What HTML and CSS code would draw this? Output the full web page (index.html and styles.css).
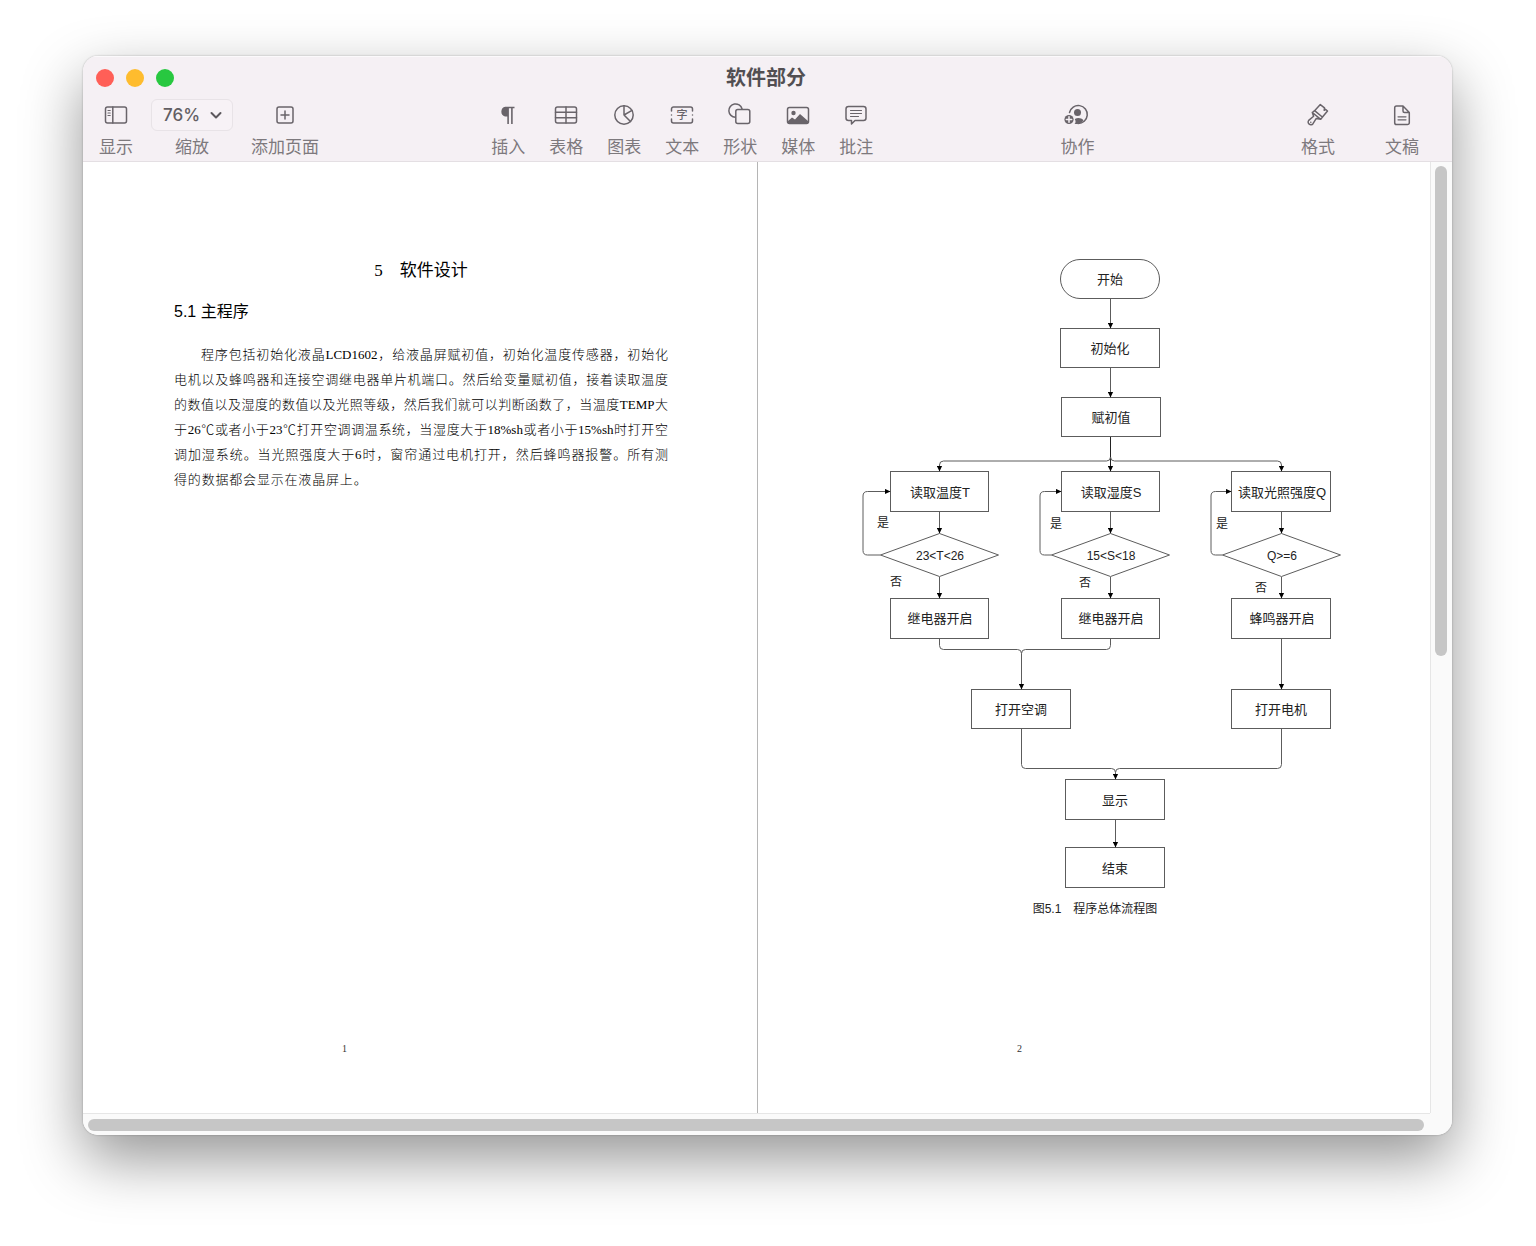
FILE: index.html
```html
<!DOCTYPE html>
<html lang="zh-CN">
<head>
<meta charset="utf-8">
<meta name="viewport" content="width=device-width, initial-scale=1">
<title>软件部分</title>
<link rel="stylesheet" href="styles.css">
</head>
<body>
<div class="window">
  <header class="titlebar">
    <div class="lights">
      <button class="light light-close" type="button" aria-label="关闭"></button>
      <button class="light light-min" type="button" aria-label="最小化"></button>
      <button class="light light-max" type="button" aria-label="全屏"></button>
    </div>
    <h1 class="title">软件部分</h1>
  </header>

  <div class="toolbar" role="toolbar">
    <div class="group group-view">
      <button class="tool" type="button">
        <svg class="icon" viewBox="0 0 28 28"><rect x="3.5" y="6" width="21" height="16" rx="2"/><path d="M10.8 6v16"/><path class="thin" d="M6 9.500h2.200M6 12h2.200M6 14.500h2.200"/></svg>
        <span>显示</span>
      </button>
      <div class="tool">
        <div class="zoom">
          <select class="zoom-select" id="zoom"><option>76%</option><option>100%</option></select>
          <svg class="chevron" viewBox="0 0 12 12"><path d="M1.5 4l4.5 4.5L10.500 4"/></svg>
        </div>
        <label for="zoom">缩放</label>
      </div>
      <button class="tool" type="button">
        <svg class="icon" viewBox="0 0 28 28"><rect x="6" y="6" width="16" height="16" rx="2"/><path d="M14 10v8M10 14h8"/></svg>
        <span>添加页面</span>
      </button>
    </div>

    <div class="group group-insert">
      <button class="tool" type="button">
        <svg class="icon" viewBox="0 0 28 28"><path class="solid" d="M20.500 5.800H11.300a5 5 0 0 0-.3 9.700H13.300V23h1.600V7.200h2.200V23h1.600V7.200h1.800z"/></svg>
        <span>插入</span>
      </button>
      <button class="tool" type="button">
        <svg class="icon" viewBox="0 0 28 28"><rect x="3.500" y="6" width="21" height="16" rx="2"/><path d="M3.500 11.300h21M3.500 16.700h21M14 6v16"/></svg>
        <span>表格</span>
      </button>
      <button class="tool" type="button">
        <svg class="icon" viewBox="0 0 28 28"><circle cx="14" cy="14" r="9.200"/><path d="M14 4.800V14l8-4.600M14 14l6.500 6.500"/></svg>
        <span>图表</span>
      </button>
      <button class="tool" type="button">
        <svg class="icon" viewBox="0 0 28 28"><path d="M3.500 10V8a2 2 0 0 1 2-2h17a2 2 0 0 1 2 2v2M3.500 18v2a2 2 0 0 0 2 2h17a2 2 0 0 0 2-2v-2M3.500 13.900v.2M24.500 13.900v.2"/><text class="icon-text" x="14" y="18" text-anchor="middle">字</text></svg>
        <span>文本</span>
      </button>
      <button class="tool" type="button">
        <svg class="icon" viewBox="0 0 28 28"><path d="M9.300 16.300A6.700 6.700 0 1 1 16 7.800"/><rect x="9.800" y="8.500" width="14" height="14" rx="2"/></svg>
        <span>形状</span>
      </button>
      <button class="tool" type="button">
        <svg class="icon" viewBox="0 0 28 28"><rect x="3.500" y="6.500" width="21" height="16" rx="2"/><circle class="solid" cx="9.500" cy="12" r="2.200"/><path class="solid" d="M4 20l4-3.500 3 2 5-5.500 8 7v1.500a1 1 0 0 1-1 1H5a1 1 0 0 1-1-1z"/></svg>
        <span>媒体</span>
      </button>
      <button class="tool" type="button">
        <svg class="icon" viewBox="0 0 28 28"><path d="M6.500 5.500h15a2.500 2.500 0 0 1 2.500 2.500v9a2.500 2.500 0 0 1-2.500 2.500H13L9.500 23v-3.500h-3A2.500 2.500 0 0 1 4 17V8a2.500 2.500 0 0 1 2.500-2.500z"/><path class="thin" d="M8.500 9.500h11M8.500 12.500h11M8.500 15.500h8"/></svg>
        <span>批注</span>
      </button>
    </div>

    <div class="group group-share">
      <button class="tool" type="button">
        <svg class="icon" viewBox="0 0 28 28"><path d="M5.500 11.500A9 9 0 1 1 14 22.500"/><circle class="solid" cx="13.500" cy="11.500" r="3.500"/><path class="solid" d="M10.500 22.800c1.500-.8 1.300-3 .3-4.800 3-1.600 6.500-1.200 8.800 1.300-2 2.800-5 4.300-9.100 3.500z"/><circle class="solid" cx="5" cy="18.500" r="4.600"/><path class="cut" d="M5 15.800v5.400M2.300 18.500h5.400"/></svg>
        <span>协作</span>
      </button>
    </div>

    <div class="group group-inspect">
      <button class="tool" type="button">
        <svg class="icon" viewBox="0 0 28 28"><path d="M8.300 11.500l8.400 6.800 1.600-2 5.200-6.300-2-1.700-1.300 1 .3-2.400-4.200-3.300-5.700 6.100zM8.300 11.500l1.300 3.700-4.900 4.200a2.700 2.700 0 1 0 4.300 3.300l3.300-5.300 4.400.9M10.600 9.700l7.700 6.300"/><circle class="solid" cx="6.800" cy="21.200" r=".8"/></svg>
        <span>格式</span>
      </button>
      <button class="tool" type="button">
        <svg class="icon" viewBox="0 0 28 28"><path d="M15 5H8.500a1.800 1.800 0 0 0-1.800 1.800v14.900a1.800 1.800 0 0 0 1.800 1.800h11a1.800 1.800 0 0 0 1.800-1.800V11.500zM15 5v5a1.500 1.500 0 0 0 1.500 1.500h4.800"/><path class="thin" d="M10 15.800h8M10 18.800h8"/></svg>
        <span>文稿</span>
      </button>
    </div>
  </div>

  <main class="viewport">
    <div class="pages">
      <article class="page page-text">
        <h2 class="chapter">5　软件设计</h2>
        <h3 class="section">5.1 主程序</h3>
        <p class="prose">
          <span class="line line-first">程序包括初始化液晶LCD1602，给液晶屏赋初值，初始化温度传感器，初始化</span>
          <span class="line">电机以及蜂鸣器和连接空调继电器单片机端口。然后给变量赋初值，接着读取温度</span>
          <span class="line">的数值以及湿度的数值以及光照等级，然后我们就可以判断函数了，当温度TEMP大</span>
          <span class="line">于26℃或者小于23℃打开空调调温系统，当湿度大于18%sh或者小于15%sh时打开空</span>
          <span class="line">调加湿系统。当光照强度大于6时，窗帘通过电机打开，然后蜂鸣器报警。所有测</span>
          <span class="line line-last">得的数据都会显示在液晶屏上。</span>
        </p>
        <footer class="folio">1</footer>
      </article>

      <article class="page page-figure">
        <figure class="figure">
          <svg class="flow" viewBox="-11 0 492 636" role="img" aria-label="程序总体流程图">
            <defs>
              <marker id="tip" markerUnits="userSpaceOnUse" markerWidth="6" markerHeight="6" refX="5" refY="3" orient="auto"><path class="tip" d="M0 .4L5.500 3L0 5.600z"/></marker>
            </defs>
            <g class="node">
              <rect x="200.500" y="3.500" width="99" height="39" rx="19.500"/>
              <rect x="200.500" y="72.500" width="99" height="39"/>
              <rect x="201.500" y="141.500" width="99" height="39"/>
              <rect x="30.500" y="215.500" width="98" height="40"/>
              <rect x="201.500" y="215.500" width="98" height="40"/>
              <rect x="371.500" y="215.500" width="99" height="40"/>
              <path d="M20.500 299L79.500 277.500L138.500 299L79.500 320.500z"/>
              <path d="M191.500 299L250.500 277.500L309.500 299L250.500 320.500z"/>
              <path d="M362.500 299L421.500 277.500L480.500 299L421.500 320.500z"/>
              <rect x="30.500" y="342.500" width="98" height="40"/>
              <rect x="201.500" y="342.500" width="98" height="40"/>
              <rect x="371.500" y="342.500" width="99" height="40"/>
              <rect x="111.500" y="433.500" width="99" height="39"/>
              <rect x="371.500" y="433.500" width="99" height="39"/>
              <rect x="205.500" y="523.500" width="99" height="40"/>
              <rect x="205.500" y="591.500" width="99" height="40"/>
            </g>
            <g class="edge">
              <path d="M250.500 43V72"/>
              <path d="M250.500 112V141"/>
              <path class="trunk" d="M250.500 181V215"/>
              <path d="M250.500 201q0 4-4 4H83.500q-4 0-4 4v6"/>
              <path d="M250.500 201q0 4 4 4H417.500q4 0 4 4v6"/>
              <path d="M79.500 256V277"/>
              <path d="M250.500 256V277"/>
              <path d="M421.500 256V277"/>
              <path d="M20.500 299H7.500q-4.500 0-4.500-4.500V240q0-4.500 4.500-4.500H30"/>
              <path d="M191.500 299H184.500q-4.500 0-4.500-4.500V240q0-4.500 4.500-4.500H201"/>
              <path d="M362.500 299H355.500q-4.500 0-4.500-4.500V240q0-4.500 4.500-4.500H371"/>
              <path d="M79.500 321V342"/>
              <path d="M250.500 321V342"/>
              <path d="M421.500 321V342"/>
              <path d="M79.500 383v6.500q0 4 4 4H157.500q4 0 4 4V433"/>
              <path class="join" d="M250.500 383v6.500q0 4-4 4H165.500q-4 0-4 4"/>
              <path d="M421.500 383V433"/>
              <path d="M161.500 473v35.500q0 4 4 4H251.500q4 0 4 4V523"/>
              <path class="join" d="M421.500 473v35.500q0 4-4 4H259.500q-4 0-4 4"/>
              <path d="M255.500 564V591"/>
            </g>
            <g class="node-text">
              <text x="250" y="28">开始</text>
              <text x="250" y="97">初始化</text>
              <text x="251" y="166">赋初值</text>
              <text x="80" y="241">读取温度T</text>
              <text x="251" y="241">读取湿度S</text>
              <text x="422" y="241">读取光照强度Q</text>
              <text x="80" y="367">继电器开启</text>
              <text x="251" y="367">继电器开启</text>
              <text x="422" y="367">蜂鸣器开启</text>
              <text x="161" y="458">打开空调</text>
              <text x="421" y="458">打开电机</text>
              <text x="255" y="549">显示</text>
              <text x="255" y="617">结束</text>
            </g>
            <g class="cond-text">
              <text x="80" y="304">23&lt;T&lt;26</text>
              <text x="251" y="304">15&lt;S&lt;18</text>
              <text x="422" y="304">Q&gt;=6</text>
              <text x="23" y="271">是</text>
              <text x="196" y="272">是</text>
              <text x="362" y="272">是</text>
              <text x="36" y="330">否</text>
              <text x="225" y="331">否</text>
              <text x="401" y="336">否</text>
            </g>
          </svg>
          <figcaption class="caption">图5.1　程序总体流程图</figcaption>
        </figure>
        <footer class="folio">2</footer>
      </article>
    </div>
    <div class="track track-y"><div class="thumb thumb-y"></div></div>
    <div class="track track-x"><div class="thumb thumb-x"></div></div>
  </main>
</div>
</body>
</html>
```
FILE: styles.css
```css
* {
  box-sizing: border-box;
}

body {
  margin: 0;
  min-height: 100vh;
  padding: 56px 84px 111px 83px;
  display: flex;
  background: #fff;
  color: #000;
  font-family: "Liberation Sans", "Noto Sans CJK SC", sans-serif;
}

h1,
h2,
h3,
p,
figure {
  margin: 0;
  font-weight: 400;
}

button {
  border: 0;
  padding: 0;
  background: none;
  font: inherit;
  color: inherit;
}

/* Window frame */
.window {
  flex: 1;
  min-width: 0;
  display: flex;
  flex-direction: column;
  border-radius: 15px;
  overflow: hidden;
  background: #fff;
  box-shadow: 0 0 2px rgba(0, 0, 0, 0.3), 0 24px 60px rgba(0, 0, 0, 0.42);
}

.titlebar {
  height: 43px;
  display: grid;
  grid-template-columns: 1fr auto 1fr;
  align-items: center;
  padding: 0 16px 0 13px;
  background: #f5f0f4;
  box-shadow: inset 0 1px #fbf9fb;
}

.lights {
  display: flex;
  gap: 12px;
}

.light {
  width: 18px;
  height: 18px;
  border-radius: 50%;
}

.light-close {
  background: #ff5f57;
}

.light-min {
  background: #febc2e;
}

.light-max {
  background: #28c840;
}

.title {
  font-size: 20px;
  line-height: 24px;
  font-weight: 700;
  color: #524f52;
}

/* Toolbar */
.toolbar {
  display: grid;
  grid-template-columns: auto 171fr auto 186fr auto 205fr auto;
  padding: 0 33px 1px 16px;
  border-bottom: 1px solid #e4dfe3;
  background: #f5f0f4;
  color: #7d797d;
  font-size: 17px;
  line-height: 24px;
}

.group {
  display: flex;
  gap: 24px;
}

.group-view {
  grid-column: 1;
  gap: 18px;
}

.group-insert {
  grid-column: 3;
}

.group-share {
  grid-column: 5;
}

.group-inspect {
  grid-column: 7;
  gap: 50px;
}

.tool {
  display: flex;
  flex-direction: column;
  align-items: center;
  gap: 5px;
  white-space: nowrap;
}

.icon {
  width: 28px;
  height: 32px;
  fill: none;
  stroke: #69646a;
  stroke-width: 1.5;
  stroke-linejoin: round;
  stroke-linecap: round;
  overflow: visible;
}

.icon .solid {
  fill: #69646a;
  stroke: none;
}

.icon .thin {
  stroke-width: 1.2;
}

.icon .cut {
  stroke: #f5f0f4;
}

.icon-text {
  fill: #69646a;
  stroke: none;
  font-size: 11px;
  font-weight: 500;
}

.zoom {
  display: grid;
  grid-template-columns: 82px;
  align-items: center;
}

.zoom-select {
  grid-area: 1 / 1;
  height: 32px;
  padding: 0 0 0 11px;
  border: 1px solid #e8e3e7;
  border-radius: 6px;
  background: #f7f2f6;
  appearance: none;
  font-family: Inter, sans-serif;
  font-size: 17px;
  font-weight: 500;
  color: #625e63;
}

.chevron {
  grid-area: 1 / 1;
  justify-self: end;
  width: 12px;
  height: 12px;
  margin-right: 11px;
  fill: none;
  stroke: #5c585d;
  stroke-width: 2;
  stroke-linecap: round;
  stroke-linejoin: round;
  pointer-events: none;
}

/* Document area */
.viewport {
  flex: 1;
  display: grid;
  grid-template-columns: 1fr 22px;
  grid-template-rows: 1fr 22px;
}

.pages {
  display: grid;
  grid-template-columns: 675fr 672fr;
}

.page {
  min-width: 0;
  display: flex;
  flex-direction: column;
  padding: 97px 89px 56px 91px;
}

.page-text {
  border-right: 1px solid #b5b5b5;
}

.page-figure {
  padding-top: 94px;
}

.chapter {
  font-family: "Liberation Serif", "Noto Sans CJK SC", serif;
  font-size: 17px;
  line-height: 24px;
  text-align: center;
}

.section {
  margin-top: 17px;
  font-size: 16px;
  line-height: 24px;
}

.prose {
  margin-top: 18px;
  font-family: "Liberation Serif", "Noto Sans CJK SC", serif;
  font-size: 13px;
  font-weight: 300;
  line-height: 25px;
  color: #000;
}

.line {
  display: block;
  white-space: nowrap;
  text-align: justify;
  text-align-last: justify;
}

.line-first {
  padding-left: 27px;
}

.line-last {
  width: 39%;
}

.folio {
  margin-top: auto;
  padding-left: 168px;
  font-family: "Liberation Serif", serif;
  font-size: 10px;
  line-height: 16px;
  color: #333;
}

/* Flowchart */
.flow {
  display: block;
  width: 100%;
}

.node,
.edge {
  fill: none;
  stroke: #5c5c5c;
  stroke-width: 1;
}

.edge path {
  marker-end: url(#tip);
}

.edge .trunk {
  stroke: #222;
}

.edge .join {
  marker-end: none;
}

.tip {
  fill: #000;
  stroke: none;
}

.node-text,
.cond-text {
  font-size: 13px;
  fill: #222;
  text-anchor: middle;
}

.cond-text {
  font-size: 12px;
}

.caption {
  margin-top: 9px;
  font-size: 12px;
  line-height: 16px;
  text-align: center;
  color: #222;
}

/* Scrollbars */
.track {
  background: #fafafa;
}

.track-y {
  padding: 4px;
  border-left: 1px solid #e6e6e6;
}

.track-x {
  grid-column: 1 / -1;
  padding: 6px 28px 4px 5px;
  background: linear-gradient(#e6e6e6, #e6e6e6) top left / calc(100% - 22px) 1px no-repeat #fafafa;
}

.thumb {
  border-radius: 6px;
  background: #c6c6c6;
}

.thumb-y {
  width: 12px;
  height: 52%;
}

.thumb-x {
  height: 12px;
}
```
